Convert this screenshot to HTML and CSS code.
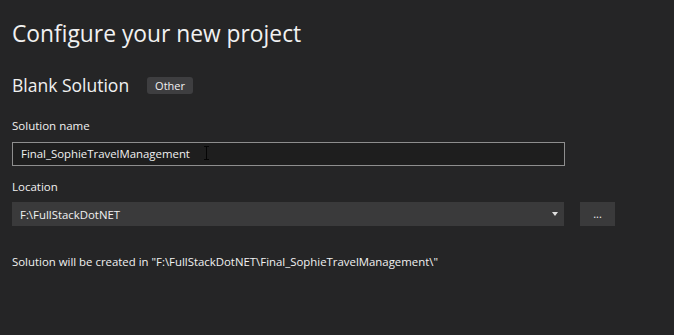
FILE: index.html
```html
<!DOCTYPE html>
<html lang="en">
<head>
  <meta charset="UTF-8" />
  <title>Configure your new project</title>
  <link rel="stylesheet" href="styles.css">
</head>
<body>
  <main class="page">
    <h1 class="title">Configure your new project</h1>

    <div class="template">
      <span class="template-name">Blank Solution</span>
      <span class="tag">Other</span>
    </div>

    <label class="field-label first">Solution name</label>
    <div class="text-input">
      <span>Final_SophieTravelManagement</span>
      <span class="ibeam"></span>
    </div>

    <label class="field-label">Location</label>
    <div class="location-row">
      <div class="combo">
        <span>F:\FullStackDotNET</span>
        <span class="arrow"></span>
      </div>
      <div class="browse">...</div>
    </div>

    <p class="summary">Solution will be created in "F:\FullStackDotNET\Final_SophieTravelManagement\"</p>
  </main>
</body>
</html>
```

FILE: styles.css
```css
body {
  margin: 0;
  background-color: #252526;
  color: #f1f1f1;
  font-family: 'Open Sans', sans-serif;
}

.page {
  padding: 18px 12px;
}

.title {
  margin: 0;
  font-size: 22.8px;
  font-weight: 400;
  line-height: 32px;
}

.template {
  display: flex;
  align-items: center;
  gap: 18px;
  margin-top: 22px;
}

.template-name {
  font-size: 17.5px;
  line-height: 26px;
}

.tag {
  background-color: #3e3e40;
  border-radius: 3px;
  font-size: 11px;
  line-height: 17px;
  padding: 0 8px;
}

.field-label {
  display: block;
  font-size: 11.5px;
  line-height: 16px;
  margin-top: 13px;
  margin-bottom: 7px;
}

.field-label.first {
  margin-top: 20px;
  margin-bottom: 8px;
}

.text-input {
  position: relative;
  width: 543px;
  height: 22px;
  border: 1px solid #8e8e8e;
  background-color: #1e1e1e;
  font-size: 11.4px;
  line-height: 22px;
  padding-left: 8px;
}

.ibeam {
  position: absolute;
  left: 193px;
  top: 3px;
  width: 1px;
  height: 14px;
  background-color: #050505;
}

.ibeam::before,
.ibeam::after {
  content: "";
  position: absolute;
  left: -2px;
  width: 5px;
  height: 1px;
  background-color: #050505;
}

.ibeam::before { top: 0; }
.ibeam::after { bottom: 0; }

.location-row {
  display: flex;
  gap: 16px;
}

.combo {
  display: flex;
  align-items: center;
  justify-content: space-between;
  width: 538px;
  height: 24px;
  padding: 0 6px 0 8px;
  background-color: #3a3a3b;
  font-size: 11.4px;
}

.arrow {
  width: 0;
  height: 0;
  border-left: 3.5px solid transparent;
  border-right: 3.5px solid transparent;
  border-top: 4px solid #e0e0e0;
}

.browse {
  width: 35px;
  height: 24px;
  background-color: #3a3a3b;
  font-size: 11px;
  line-height: 24px;
  text-align: center;
}

.summary {
  margin: 28px 0 0;
  font-size: 11.4px;
  line-height: 16px;
}
```
